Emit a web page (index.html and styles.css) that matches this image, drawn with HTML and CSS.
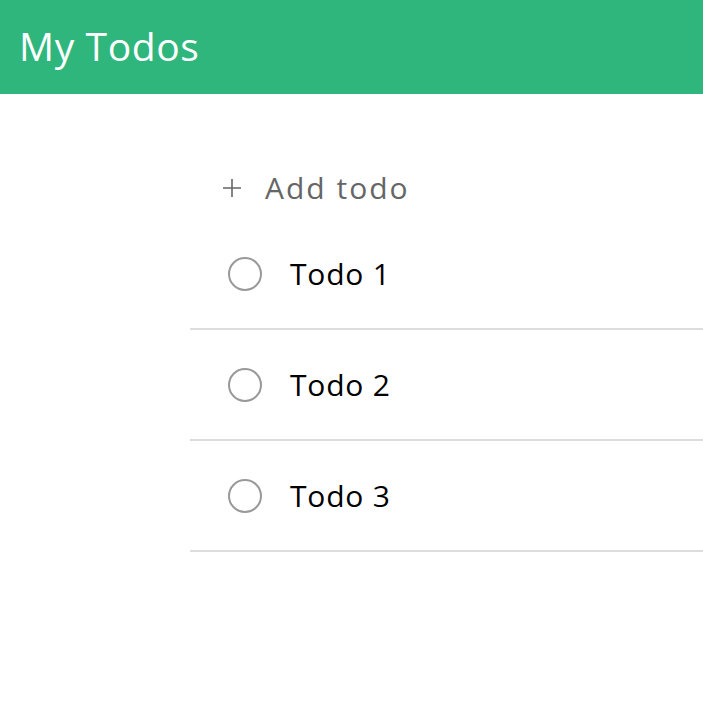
FILE: index.html
```html
<!DOCTYPE html>
<html>
<head>
<meta charset="utf-8">
<link rel="stylesheet" href="styles.css">
</head>
<body>
<header class="app-header"><h1 class="app-title">My Todos</h1></header>
<main class="todo-list">
  <div class="add-row">
    <svg class="plus" width="20" height="20" viewBox="0 0 20 20"><path d="M10 1V19M1 10H19" stroke="#666" stroke-width="1.6" fill="none"/></svg>
    <span class="add-label">Add todo</span>
  </div>
  <div class="todo-row"><span class="check"></span><span class="todo-text">Todo 1</span></div>
  <div class="todo-row"><span class="check"></span><span class="todo-text">Todo 2</span></div>
  <div class="todo-row"><span class="check"></span><span class="todo-text">Todo 3</span></div>
</main>
</body>
</html>
```
FILE: styles.css
```css
html, body { margin: 0; padding: 0; background: #fff; overflow: hidden; }
body { font-family: "Open Sans", "DejaVu Sans", sans-serif; }
.app-header {
  height: 94px;
  background: #2eb67d;
  display: flex;
  align-items: center;
  padding-left: 19px;
}
.app-title {
  margin: 0;
  color: #fff;
  font-weight: 400;
  font-size: 39px;
  letter-spacing: 0.6px;
  line-height: 1;
  position: relative;
  top: -2px;
}
.todo-list {
  margin-left: 190px;
  padding-top: 62px;
}
.add-row {
  height: 63px;
  display: flex;
  align-items: center;
  padding-left: 32px;
  gap: 23px;
}
.plus { display: block; }
.add-label { color: #666; font-size: 30px; letter-spacing: 2px; }
.todo-row {
  height: 109px;
  display: flex;
  align-items: center;
  padding-left: 38px;
  gap: 28px;
  border-bottom: 2px solid #dddddd;
}
.check {
  width: 30px;
  height: 30px;
  border: 2px solid #999;
  border-radius: 50%;
  flex: none;
}
.todo-text { color: #000; font-size: 30px; letter-spacing: 0.8px; }
```
